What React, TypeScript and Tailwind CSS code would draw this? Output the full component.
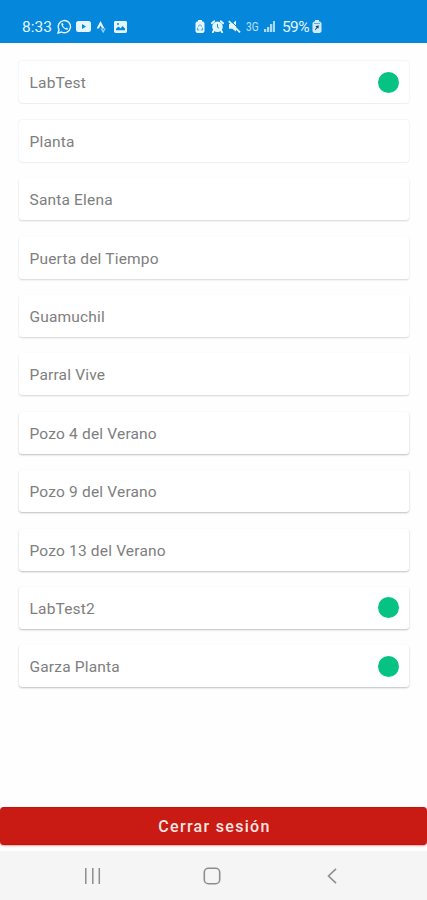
import React from "react";

type Site = { name: string; online?: boolean; shadow: string };

const soft = "shadow-[0_0_2px_rgba(0,0,0,0.13),0_1px_1px_rgba(0,0,0,0.03)]";
const medium = "shadow-[0_1px_2px_rgba(0,0,0,0.16)]";
const strong = "shadow-[0_1px_2px_rgba(0,0,0,0.25)]";

const sites: Site[] = [
  { name: "LabTest", online: true, shadow: soft },
  { name: "Planta", shadow: soft },
  { name: "Santa Elena", shadow: medium },
  { name: "Puerta del Tiempo", shadow: medium },
  { name: "Guamuchil", shadow: medium },
  { name: "Parral Vive", shadow: medium },
  { name: "Pozo 4 del Verano", shadow: strong },
  { name: "Pozo 9 del Verano", shadow: strong },
  { name: "Pozo 13 del Verano", shadow: strong },
  { name: "LabTest2", online: true, shadow: strong },
  { name: "Garza Planta", online: true, shadow: strong },
];

function StatusBar() {
  return (
    <header className="flex h-[42.5px] shrink-0 items-center bg-[#0587dc] pt-[11px] pl-[22px] text-[#e3f6ff]">
      <span className="w-[35px] text-[15.5px] leading-4 whitespace-nowrap">8:33</span>
      <svg className="h-[15px] w-[15px] shrink-0" viewBox="0 0 15 15" fill="none" stroke="currentColor">
        <path d="M1 14l1-3.5A6.1 6.1 0 1 1 4.5 13z" strokeWidth="1.4" />
        <path d="M5.2 3.7c-1.5.8-1 3 1 5s4.300 2.600 5.100 1.100L9.600 8.500l-.9.8C7.500 8.800 6.300 7.600 5.900 6.500l.7-.9z" fill="currentColor" stroke="none" />
      </svg>
      <svg className="ml-1 h-[11px] w-[15px] shrink-0" viewBox="0 0 15 11" fill="currentColor">
        <path fillRule="evenodd" d="M2.500 0h10A2.500 2.500 0 0 1 15 2.500v6a2.500 2.500 0 0 1-2.500 2.500h-10A2.500 2.500 0 0 1 0 8.500v-6A2.500 2.500 0 0 1 2.500 0zM6 3v5l4-2.500z" />
      </svg>
      <svg className="ml-[5px] h-[14px] w-[11px] shrink-0" viewBox="0 0 11 14" fill="currentColor">
        <path d="M4.500 1l4 7.500H6.200L4.500 5.500 2.900 8.500H.6z" />
        <path d="M4.500 8.500h1.700l1 2 1-2h1.600L7.200 13.300z" opacity="0.65" />
      </svg>
      <svg className="ml-[7px] h-[12px] w-[13px] shrink-0" viewBox="0 0 13 13" preserveAspectRatio="none" fill="currentColor">
        <path fillRule="evenodd" d="M1.500 0h10A1.500 1.500 0 0 1 13 1.500v10a1.500 1.500 0 0 1-1.500 1.500h-10A1.500 1.500 0 0 1 0 11.500v-10A1.500 1.500 0 0 1 1.500 0zM2 10h9V8L8.500 5.500 6.500 8l-2-2L2 8.500zM3 2.500V4h2V2.500z" />
      </svg>
      <svg className="ml-[68px] h-[13px] w-[10px] shrink-0" viewBox="0 0 10 13" fill="currentColor">
        <path d="M3 0h4v1.500h1.200L9.500 3v8.500L8.200 13H1.800L.5 11.500V3l1.300-1.500H3z" />
        <path d="M3 6.500L5 4.700l2 1.800M2.700 7.700L2.300 10h2M7.300 7.700L7.700 10h-2" fill="none" stroke="#4aa8e2" strokeWidth="1" />
      </svg>
      <svg className="ml-[6px] h-[13px] w-[13px] shrink-0" viewBox="0 0 13 13" fill="currentColor">
        <circle cx="6.500" cy="6.800" r="5.300" />
        <path d="M.8 3.200l2.400-2M12.200 3.200l-2.400-2M2.800 10.500l-1 1.800M10.200 10.500l1 1.800" stroke="currentColor" strokeWidth="1.800" strokeLinecap="round" />
        <path d="M6.500 4.200v3l1.500 1" fill="none" stroke="#0587dc" />
      </svg>
      <svg className="ml-[4px] h-[13px] w-[13px] shrink-0" viewBox="0 0 13 13" fill="currentColor">
        <path d="M1 4h3l4-3.500v11L4.200 8.800H1z" />
        <path d="M3 1l9 9" stroke="#0587dc" strokeWidth="1" />
        <path d="M.8 1.200L12 12.300" stroke="currentColor" strokeWidth="1.800" />
      </svg>
      <span className="ml-[5px] w-[17px] origin-left scale-x-[0.78] text-[13px] leading-4 whitespace-nowrap opacity-80">3G</span>
      <svg className="ml-px h-[11px] w-[11px] shrink-0 opacity-75" viewBox="0 0 11 11" fill="currentColor">
        <path d="M0 8h2.300v3H0zM3 6h2.300v5H3zM6 3h2.300v8H6zM9 0h2v11H9z" />
      </svg>
      <span className="ml-[7px] w-[30px] text-[15.5px] leading-4 tracking-[-0.6px] whitespace-nowrap">59%</span>
      <svg className="h-[13px] w-[10px] shrink-0" viewBox="0 0 10 13" fill="currentColor">
        <path d="M3 0h4v1.500h1L9.500 3v8.500L8 13H2L.5 11.500V3L2 1.500h1z" opacity="0.9" />
        <path d="M2 3.500h6" stroke="#4db4eb" />
        <path d="M3.500 6l3.500-.5-.7 3-1-.6-1.800 2.100-.7-.6 1.700-2z" fill="#17476b" />
      </svg>
    </header>
  );
}

function SiteCard({ site }: { site: Site }) {
  return (
    <li className={`flex h-[42px] items-center justify-between rounded-[3px] bg-white pr-[10px] pl-[10.500px] ${site.shadow}`}>
      <span className="pt-[2px] text-[15.5px] leading-5 tracking-[0.18px] text-[#7e7e7e]">{site.name}</span>
      {site.online && <span className="h-[21px] w-[21px] rounded-full bg-[#06c283]" />}
    </li>
  );
}

export default function App() {
  return (
    <div className="flex h-[900px] w-[427px] flex-col overflow-hidden bg-[#fefefe] font-['Roboto',sans-serif]">
      <StatusBar />
      <main className="flex-1 pt-[18.900px] pr-[18px] pl-[19px]">
        <ul className="flex flex-col gap-[16.400px]">
          {sites.map((site) => (
            <SiteCard key={site.name} site={site} />
          ))}
        </ul>
      </main>
      <button className="mb-[6px] flex h-[38px] shrink-0 items-center justify-center rounded-[4px] border-y border-[#b9160e] bg-[#c91b14] pt-[2px] pl-[2px] text-[16px] font-medium tracking-[1.3px] text-[#fbe5e1] shadow-[0_1px_2px_rgba(190,20,10,0.4)]">
        Cerrar sesión
      </button>
      <nav className="flex h-[49px] shrink-0 items-center bg-[#f5f5f5] pl-[84px] text-[#8e8e8e]">
        <svg className="h-4 w-[18px]" viewBox="0 0 18 16" fill="none" stroke="currentColor" strokeWidth="1.500">
          <path d="M1.800 0v16M8.800 0v16M15.300 0v16" />
        </svg>
        <svg className="ml-[101px] h-[18px] w-[18px]" viewBox="0 0 18 18" fill="none" stroke="currentColor" strokeWidth="1.600">
          <rect x="1.300" y="1.300" width="15.400" height="15.400" rx="4" />
        </svg>
        <svg className="ml-[106px] h-4 w-[10px]" viewBox="0 0 10 16" fill="none" stroke="currentColor" strokeWidth="1.600">
          <path d="M9 .8L1.500 8 9 15.200" />
        </svg>
      </nav>
    </div>
  );
}
